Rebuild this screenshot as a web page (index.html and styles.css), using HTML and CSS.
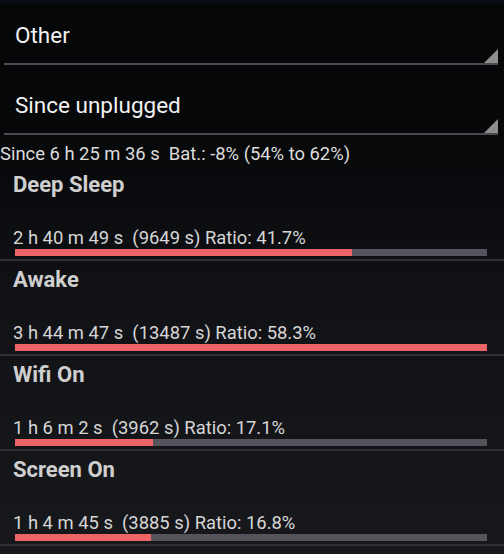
FILE: index.html
```html
<!DOCTYPE html>
<html lang="en">
<head>
    <meta charset="UTF-8">
    <title>Battery Stats</title>
    <link rel="stylesheet" href="styles.css">
</head>
<body>
    <div class="spinners">
        <div class="spinner">
            <span class="spinner-text">Other</span>
            <span class="spinner-arrow"></span>
        </div>
        <div class="spinner">
            <span class="spinner-text">Since unplugged</span>
            <span class="spinner-arrow"></span>
        </div>
    </div>

    <div class="summary">Since 6 h 25 m 36 s&nbsp; Bat.: -8% (54% to 62%)</div>

    <div class="stats">
        <div class="row">
            <div class="row-title">Deep Sleep</div>
            <div class="row-detail">2 h 40 m 49 s&nbsp; (9649 s) Ratio: 41.7%</div>
            <div class="bar"><div class="bar-fill" style="width: 71.5%"></div></div>
        </div>
        <div class="row">
            <div class="row-title">Awake</div>
            <div class="row-detail">3 h 44 m 47 s&nbsp; (13487 s) Ratio: 58.3%</div>
            <div class="bar"><div class="bar-fill" style="width: 100%"></div></div>
        </div>
        <div class="row">
            <div class="row-title">Wifi On</div>
            <div class="row-detail">1 h 6 m 2 s&nbsp; (3962 s) Ratio: 17.1%</div>
            <div class="bar"><div class="bar-fill" style="width: 29.3%"></div></div>
        </div>
        <div class="row">
            <div class="row-title">Screen On</div>
            <div class="row-detail">1 h 4 m 45 s&nbsp; (3885 s) Ratio: 16.8%</div>
            <div class="bar"><div class="bar-fill" style="width: 28.8%"></div></div>
        </div>
    </div>
</body>
</html>
```

FILE: styles.css
```css
html, body {
    margin: 0;
    padding: 0;
}
body {
    width: 504px;
    height: 554px;
    overflow: hidden;
    font-family: Roboto, "Liberation Sans", sans-serif;
    color: #e6e6e6;
    background: linear-gradient(to bottom, #0a0f17 0, #050608 6px, #07080a 140px, #111215 300px, #17181c 554px);
}
.spinner {
    position: relative;
    height: 70px;
    margin: 0 6px 0 4px;
    display: flex;
    align-items: center;
    padding-left: 11px;
    box-sizing: border-box;
}
.spinner::after {
    content: "";
    position: absolute;
    left: 0;
    right: 0;
    bottom: 5px;
    height: 2px;
    background-color: #4a4b4e;
}
.spinner-text {
    font-size: 22.5px;
    color: #f2f2f2;
}
.spinner-arrow {
    position: absolute;
    right: 0;
    bottom: 5px;
    width: 0;
    height: 0;
    border-left: 16px solid transparent;
    border-bottom: 16px solid #8e8e8e;
}
.summary {
    font-size: 18.4px;
    line-height: 22px;
    color: #dcdcdc;
    margin: 3px 0 1px;
}
.row {
    padding: 5px 17px 3px 13px;
    border-bottom: 2px solid #2f3034;
}
.row-title {
    font-size: 22px;
    font-weight: 700;
    line-height: 28px;
    color: #cfcfcf;
}
.row-detail {
    font-size: 18.4px;
    line-height: 22px;
    color: #d6d6d6;
    margin-top: 28px;
}
.bar {
    height: 7px;
    margin: 0 0 0 2px;
    background-color: #57535c;
}
.bar-fill {
    height: 100%;
    background-color: #ef6467;
}
```
